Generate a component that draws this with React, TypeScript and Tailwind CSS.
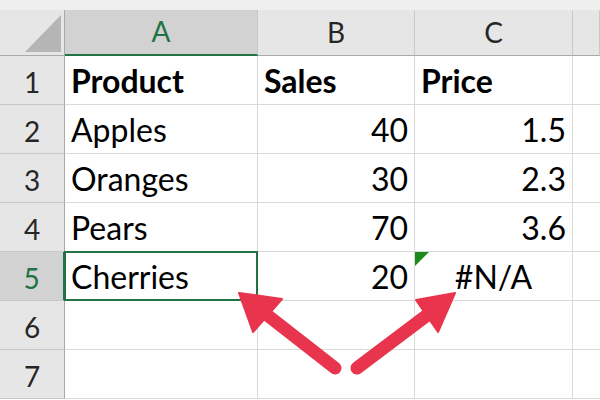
import React from "react";

type Cell = { text: string; align: "left" | "right" | "center"; bold?: boolean };

const rows: Cell[][] = [
  [
    { text: "Product", align: "left", bold: true },
    { text: "Sales", align: "left", bold: true },
    { text: "Price", align: "left", bold: true },
  ],
  [
    { text: "Apples", align: "left" },
    { text: "40", align: "right" },
    { text: "1.5", align: "right" },
  ],
  [
    { text: "Oranges", align: "left" },
    { text: "30", align: "right" },
    { text: "2.3", align: "right" },
  ],
  [
    { text: "Pears", align: "left" },
    { text: "70", align: "right" },
    { text: "3.6", align: "right" },
  ],
  [
    { text: "Cherries", align: "left" },
    { text: "20", align: "right" },
    { text: "#N/A", align: "center" },
  ],
  [
    { text: "", align: "left" },
    { text: "", align: "left" },
    { text: "", align: "left" },
  ],
  [
    { text: "", align: "left" },
    { text: "", align: "left" },
    { text: "", align: "left" },
  ],
];

const columns = ["A", "B", "C", ""];

function HeaderCell({ label, selected }: { label: string; selected?: boolean }) {
  return (
    <div
      className={`flex h-[46px] items-end justify-center border-r border-r-[#c8c8c8] pb-[9px] text-[28px] leading-none ${
        selected
          ? "border-b-2 border-b-[#217346] bg-[#d2d2d2] text-[#217346]"
          : "border-b border-b-[#a9a9a9] bg-[#e6e6e6] text-[#262626]"
      }`}
    >
      {label}
    </div>
  );
}

function RowHeader({ label, selected }: { label: number; selected?: boolean }) {
  return (
    <div
      className={`flex h-[49px] items-end justify-center border-b border-b-[#c8c8c8] pb-[8px] text-[28px] leading-none ${
        selected
          ? "border-r-2 border-r-[#217346] bg-[#d2d2d2] text-[#217346]"
          : "border-r border-r-[#a9a9a9] bg-[#e6e6e6] text-[#262626]"
      }`}
    >
      {label}
    </div>
  );
}

export default function App() {
  return (
    <div className="relative h-[400px] w-[600px] overflow-hidden bg-white font-['Lato','Noto_Sans',sans-serif] text-black">
      <div className="h-[10px] bg-[#efefef]" />
      <div className="grid grid-cols-[65px_193px_157px_158px_1fr]">
        <div className="relative h-[46px] border-b border-r border-[#a9a9a9] bg-[#e6e6e6]">
          <svg className="absolute inset-0" width="65" height="46" viewBox="0 0 65 46">
            <polygon points="25,42 61,42 61,5" fill="#b5b5b5" />
          </svg>
        </div>
        {columns.map((c, i) => (
          <HeaderCell key={i} label={c} selected={i === 0} />
        ))}

        {rows.map((row, r) => (
          <React.Fragment key={r}>
            <RowHeader label={r + 1} selected={r === 4} />
            {row.map((cell, c) => (
              <div
                key={c}
                className={`relative flex h-[49px] items-end border-b border-r border-[#d9d9d9] px-[6px] pb-[7px] text-[32px] leading-none ${
                  cell.bold ? "font-bold" : ""
                } ${
                  cell.align === "right"
                    ? "justify-end"
                    : cell.align === "center"
                      ? "justify-center"
                      : "justify-start"
                }`}
              >
                {r === 4 && c === 0 ? (
                  <div className="absolute -inset-px border-2 border-[#217346]" />
                ) : null}
                {r === 4 && c === 2 ? (
                  <svg className="absolute left-0 top-0" width="16" height="16" viewBox="0 0 16 16">
                    <polygon points="0,0 14,0 0,14" fill="#1b8a1b" />
                  </svg>
                ) : null}
                <span className="relative">{cell.text}</span>
              </div>
            ))}
            <div className="h-[49px] border-b border-[#d9d9d9]" />
          </React.Fragment>
        ))}
      </div>

      <svg
        className="pointer-events-none absolute inset-0"
        width="600"
        height="400"
        viewBox="0 0 600 400"
      >
        <g fill="#e8354d" stroke="#e8354d" strokeLinecap="round" strokeLinejoin="round">
          <line x1="335" y1="368" x2="262" y2="311" strokeWidth="13" />
          <polygon points="239,293 282,299 253,332" strokeWidth="2" />
          <line x1="357" y1="368" x2="430" y2="313" strokeWidth="13" />
          <polygon points="455,293 416,300 438,332" strokeWidth="2" />
        </g>
      </svg>
    </div>
  );
}
